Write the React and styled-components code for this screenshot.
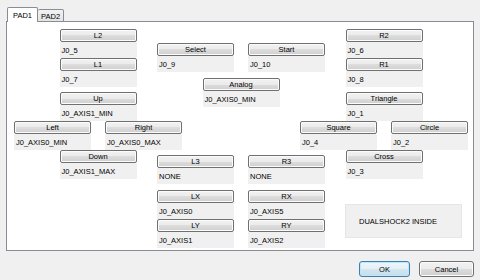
import React from "react";
import styled, { createGlobalStyle } from "styled-components";

// Page reset: dialog fills the window
const GlobalStyle = createGlobalStyle`
  html, body {
    margin: 0;
    padding: 0;
    background: #f0f0f0;
  }
  body {
    font-family: "Liberation Sans", Arial, sans-serif;
    font-size: 7.5px;
    color: #000;
  }
`;

const Dialog = styled.div`
  width: 480px;
  height: 280px;
  box-sizing: border-box;
  padding: 7px 6px 0 6px;
  display: flex;
  flex-direction: column;
  background: #f0f0f0;
`;

const TabBar = styled.div`
  display: flex;
  align-items: flex-end;
  height: 15px;
  margin-left: 1px;
  margin-bottom: -1px;
  position: relative;
  z-index: 1;
`;

const Tab = styled.div`
  box-sizing: border-box;
  height: ${(p) => (p.$active ? "15px" : "13px")};
  padding: ${(p) => (p.$active ? "3px 5px 0 5px" : "2px 3px 0 3px")};
  border: 1px solid #898c95;
  border-bottom: ${(p) => (p.$active ? "none" : "1px solid #898c95")};
  border-left: ${(p) => (p.$active ? "1px solid #898c95" : "none")};
  border-radius: 2px 2px 0 0;
  background: ${(p) =>
    p.$active ? "#fff" : "linear-gradient(#f2f2f2, #e4e4e4)"};
  line-height: 9px;
`;

const Pane = styled.div`
  box-sizing: border-box;
  width: 468px;
  height: 230px;
  border: 1px solid #898c95;
  background: #fff;
  padding: 7px 0 0 7px;
  display: flex;
  align-items: flex-start;
`;

// Three clusters of 168px that overlap by 25px
const Cluster = styled.div`
  width: 168px;
  flex: none;
  display: flex;
  flex-direction: column;
  margin-left: ${(p) => (p.$first ? "0" : "-25px")};
  margin-top: ${(p) => p.$top || 0}px;
`;

const Row = styled.div`
  display: flex;
  justify-content: ${(p) => p.$justify || "center"};
  margin-top: ${(p) => p.$gap || 0}px;
`;

const Slot = styled.div`
  width: 77px;
  display: flex;
  flex-direction: column;
`;

const KeyButton = styled.div`
  box-sizing: border-box;
  height: 13px;
  border: 1px solid #707070;
  border-radius: 2px;
  background: linear-gradient(#f2f2f2 0%, #ebebeb 50%, #dddddd 50%, #cfcfcf 100%);
  box-shadow: inset 0 0 0 1px #fbfbfb;
  display: flex;
  align-items: center;
  justify-content: center;
  line-height: 11px;
`;

const Binding = styled.div`
  height: 16px;
  background: #f0f0f0;
  padding-left: 2px;
  display: flex;
  align-items: center;
`;

const InfoBox = styled.div`
  box-sizing: border-box;
  width: 117px;
  height: 34px;
  margin: 25px 0 0 45px;
  background: #f0f0f0;
  border: 1px solid #e6e6e6;
  display: flex;
  align-items: center;
  padding-left: 13px;
`;

const Footer = styled.div`
  display: flex;
  justify-content: flex-end;
  gap: 9px;
  margin-top: 10px;
`;

const DialogButton = styled.div`
  box-sizing: border-box;
  width: ${(p) => p.$width}px;
  height: 16px;
  border: 1px solid ${(p) => (p.$default ? "#3c7fb1" : "#707070")};
  border-radius: 3px;
  background: ${(p) =>
    p.$default
      ? "linear-gradient(#eef6fb 0%, #e4eff6 50%, #d3e6f1 50%, #c6dcea 100%)"
      : "linear-gradient(#f2f2f2 0%, #ebebeb 50%, #dddddd 50%, #cfcfcf 100%)"};
  box-shadow: inset 0 0 0 1px ${(p) => (p.$default ? "#bfe6f9" : "#fbfbfb")};
  display: flex;
  align-items: center;
  justify-content: center;
`;

const Control = ({ label, value }) => (
  <Slot>
    <KeyButton>{label}</KeyButton>
    <Binding>{value}</Binding>
  </Slot>
);

const App = () => {
  return (
    <>
      <GlobalStyle />
      <Dialog>
        <TabBar>
          <Tab $active>PAD1</Tab>
          <Tab>PAD2</Tab>
        </TabBar>
        <Pane>
          {/* shoulders + d-pad */}
          <Cluster $first>
            <Row>
              <Control label="L2" value="J0_5" />
            </Row>
            <Row>
              <Control label="L1" value="J0_7" />
            </Row>
            <Row $gap={5}>
              <Control label="Up" value="J0_AXIS1_MIN" />
            </Row>
            <Row $justify="space-between">
              <Control label="Left" value="J0_AXIS0_MIN" />
              <Control label="Right" value="J0_AXIS0_MAX" />
            </Row>
            <Row>
              <Control label="Down" value="J0_AXIS1_MAX" />
            </Row>
          </Cluster>

          {/* system buttons + sticks */}
          <Cluster $top={14}>
            <Row $justify="space-between">
              <Control label="Select" value="J0_9" />
              <Control label="Start" value="J0_10" />
            </Row>
            <Row $gap={6}>
              <Control label="Analog" value="J0_AXIS0_MIN" />
            </Row>
            <Row $justify="space-between" $gap={48}>
              <Control label="L3" value="NONE" />
              <Control label="R3" value="NONE" />
            </Row>
            <Row $justify="space-between" $gap={6}>
              <Control label="LX" value="J0_AXIS0" />
              <Control label="RX" value="J0_AXIS5" />
            </Row>
            <Row $justify="space-between">
              <Control label="LY" value="J0_AXIS1" />
              <Control label="RY" value="J0_AXIS2" />
            </Row>
          </Cluster>

          {/* shoulders + face buttons */}
          <Cluster>
            <Row>
              <Control label="R2" value="J0_6" />
            </Row>
            <Row>
              <Control label="R1" value="J0_8" />
            </Row>
            <Row $gap={5}>
              <Control label="Triangle" value="J0_1" />
            </Row>
            <Row $justify="space-between">
              <Control label="Square" value="J0_4" />
              <Control label="Circle" value="J0_2" />
            </Row>
            <Row>
              <Control label="Cross" value="J0_3" />
            </Row>
            <InfoBox>DUALSHOCK2 INSIDE</InfoBox>
          </Cluster>
        </Pane>
        <Footer>
          <DialogButton $width={51} $default>
            OK
          </DialogButton>
          <DialogButton $width={55}>Cancel</DialogButton>
        </Footer>
      </Dialog>
    </>
  );
};

export default App;
